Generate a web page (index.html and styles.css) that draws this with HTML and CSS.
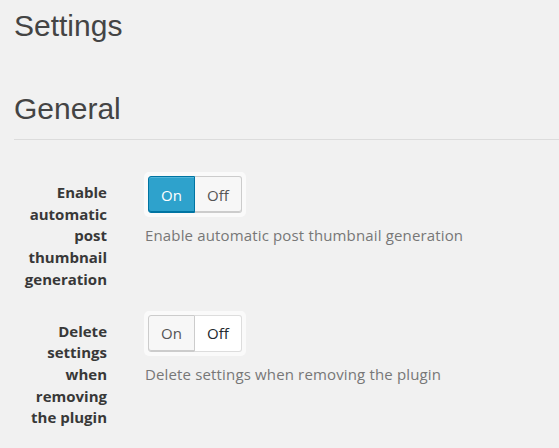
FILE: index.html
```html
<!DOCTYPE html>
<html lang="en">
<head>
<meta charset="utf-8">
<title>Settings</title>
<link rel="stylesheet" href="styles.css">
</head>
<body>
<div class="wrap">
  <h1 class="page-title">Settings</h1>
  <h2 class="section-title">General</h2>
  <div class="form">
    <div class="row">
      <div class="label">Enable automatic post thumbnail generation</div>
      <div class="field">
        <div class="switch">
          <span class="btn btn-first active">On</span>
          <span class="btn btn-last">Off</span>
        </div>
        <p class="desc">Enable automatic post thumbnail generation</p>
      </div>
    </div>
    <div class="row">
      <div class="label">Delete settings when removing the plugin</div>
      <div class="field">
        <div class="switch">
          <span class="btn btn-first">On</span>
          <span class="btn btn-last selected">Off</span>
        </div>
        <p class="desc">Delete settings when removing the plugin</p>
      </div>
    </div>
  </div>
</div>
</body>
</html>
```
FILE: styles.css
```css
html, body {
  margin: 0;
  padding: 0;
  background: #f1f1f1;
}
body {
  font-family: "Open Sans", "Noto Sans", sans-serif;
  color: #444;
}
.wrap {
  padding-left: 14px;
}
.page-title {
  font-family: "Liberation Sans", Arial, sans-serif;
  font-weight: 400;
  font-size: 30px;
  line-height: 34px;
  color: #444;
  margin: 9px 0 0;
}
.section-title {
  font-family: "Liberation Sans", Arial, sans-serif;
  font-weight: 400;
  font-size: 30px;
  line-height: 34px;
  color: #444;
  margin: 49px 0 0;
  padding-bottom: 13px;
  border-bottom: 1px solid #dcdcdc;
}
.form {
  margin-top: 22px;
}
.row {
  display: flex;
  align-items: flex-start;
  padding: 10px 0;
}
.label {
  width: 93px;
  flex: none;
  text-align: right;
  font-weight: 700;
  font-size: 15px;
  line-height: 21.7px;
  color: #383838;
  padding-top: 10px;
}
.field {
  margin-left: 37px;
}
.switch {
  display: inline-flex;
  padding: 4px;
  background: #fafafa;
  border-radius: 5px;
}
.btn {
  box-sizing: border-box;
  width: 47px;
  height: 37px;
  display: flex;
  align-items: center;
  justify-content: center;
  font-size: 15px;
  color: #555;
  background: #f7f7f7;
  border: 1px solid #ccc;
  box-shadow: inset 0 -1px 0 #ccc;
}
.btn-first {
  border-radius: 3px 0 0 3px;
}
.btn-last {
  border-radius: 0 3px 3px 0;
  border-left: 0;
}
.btn.active {
  background: #2ea2cc;
  border-color: #0074a2;
  color: #fff;
  box-shadow: inset 0 1px 0 rgba(120, 200, 230, 0.5), inset 0 -1px 0 #0074a2;
}
.btn.selected {
  background: #fff;
  border-color: #ddd;
  color: #23282d;
  box-shadow: none;
}
.desc {
  margin: 8px 0 0 1px;
  font-size: 15px;
  letter-spacing: 0.15px;
  line-height: 21px;
  color: #777;
}
```
